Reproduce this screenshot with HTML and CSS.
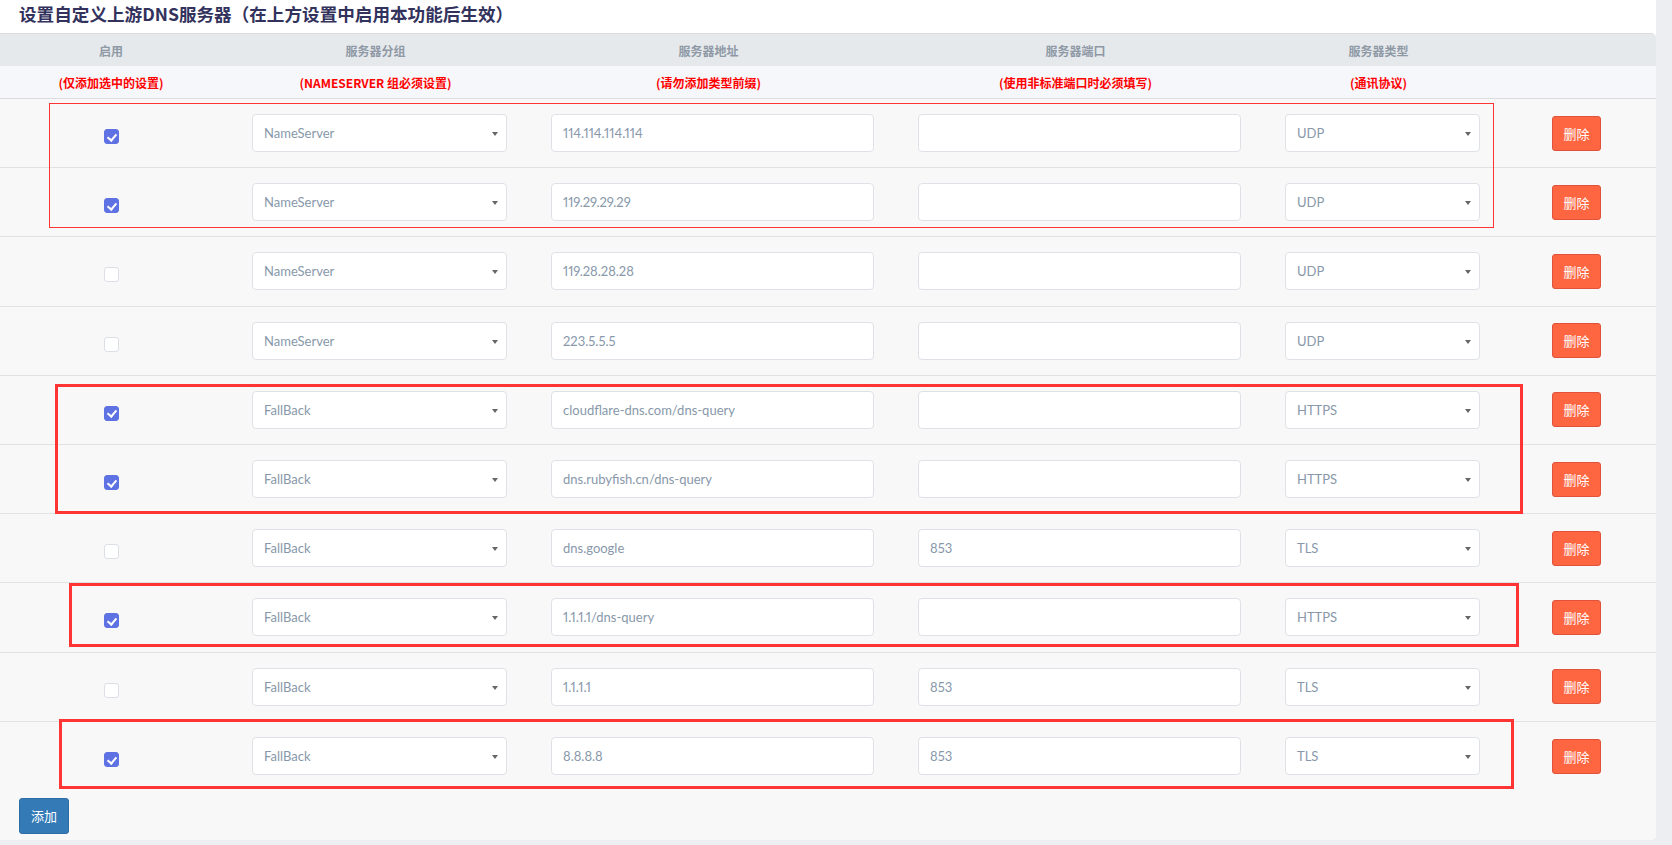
FILE: index.html
```html
<!DOCTYPE html>
<html lang="zh-CN">
<head>
<meta charset="utf-8">
<title>设置自定义上游DNS服务器</title>
<link rel="stylesheet" href="styles.css">
</head>
<body>
<div class="panel">
  <h3 class="title">设置自定义上游DNS服务器（在上方设置中启用本功能后生效）</h3>
  <div class="table">
    <div class="row head">
      <div class="cell c-chk">启用</div>
      <div class="cell">服务器分组</div>
      <div class="cell">服务器地址</div>
      <div class="cell">服务器端口</div>
      <div class="cell">服务器类型</div>
      <div class="cell"></div>
    </div>
    <div class="row desc">
      <div class="cell c-chk">(仅添加选中的设置)</div>
      <div class="cell">(NAMESERVER 组必须设置)</div>
      <div class="cell">(请勿添加类型前缀)</div>
      <div class="cell">(使用非标准端口时必须填写)</div>
      <div class="cell">(通讯协议)</div>
      <div class="cell"></div>
    </div>

    <div class="row item">
      <div class="cell c-chk"><input class="chk" type="checkbox" checked></div>
      <div class="cell"><div class="select">NameServer</div></div>
      <div class="cell"><input class="text" type="text" value="114.114.114.114"></div>
      <div class="cell"><input class="text" type="text" value=""></div>
      <div class="cell"><div class="select">UDP</div></div>
      <div class="cell c-del"><button class="btn-del">删除</button></div>
    </div>
    <div class="row item">
      <div class="cell c-chk"><input class="chk" type="checkbox" checked></div>
      <div class="cell"><div class="select">NameServer</div></div>
      <div class="cell"><input class="text" type="text" value="119.29.29.29"></div>
      <div class="cell"><input class="text" type="text" value=""></div>
      <div class="cell"><div class="select">UDP</div></div>
      <div class="cell c-del"><button class="btn-del">删除</button></div>
    </div>
    <div class="row item">
      <div class="cell c-chk"><input class="chk" type="checkbox"></div>
      <div class="cell"><div class="select">NameServer</div></div>
      <div class="cell"><input class="text" type="text" value="119.28.28.28"></div>
      <div class="cell"><input class="text" type="text" value=""></div>
      <div class="cell"><div class="select">UDP</div></div>
      <div class="cell c-del"><button class="btn-del">删除</button></div>
    </div>
    <div class="row item">
      <div class="cell c-chk"><input class="chk" type="checkbox"></div>
      <div class="cell"><div class="select">NameServer</div></div>
      <div class="cell"><input class="text" type="text" value="223.5.5.5"></div>
      <div class="cell"><input class="text" type="text" value=""></div>
      <div class="cell"><div class="select">UDP</div></div>
      <div class="cell c-del"><button class="btn-del">删除</button></div>
    </div>
    <div class="row item">
      <div class="cell c-chk"><input class="chk" type="checkbox" checked></div>
      <div class="cell"><div class="select">FallBack</div></div>
      <div class="cell"><input class="text" type="text" value="cloudflare-dns.com/dns-query"></div>
      <div class="cell"><input class="text" type="text" value=""></div>
      <div class="cell"><div class="select">HTTPS</div></div>
      <div class="cell c-del"><button class="btn-del">删除</button></div>
    </div>
    <div class="row item">
      <div class="cell c-chk"><input class="chk" type="checkbox" checked></div>
      <div class="cell"><div class="select">FallBack</div></div>
      <div class="cell"><input class="text" type="text" value="dns.rubyfish.cn/dns-query"></div>
      <div class="cell"><input class="text" type="text" value=""></div>
      <div class="cell"><div class="select">HTTPS</div></div>
      <div class="cell c-del"><button class="btn-del">删除</button></div>
    </div>
    <div class="row item">
      <div class="cell c-chk"><input class="chk" type="checkbox"></div>
      <div class="cell"><div class="select">FallBack</div></div>
      <div class="cell"><input class="text" type="text" value="dns.google"></div>
      <div class="cell"><input class="text" type="text" value="853"></div>
      <div class="cell"><div class="select">TLS</div></div>
      <div class="cell c-del"><button class="btn-del">删除</button></div>
    </div>
    <div class="row item">
      <div class="cell c-chk"><input class="chk" type="checkbox" checked></div>
      <div class="cell"><div class="select">FallBack</div></div>
      <div class="cell"><input class="text" type="text" value="1.1.1.1/dns-query"></div>
      <div class="cell"><input class="text" type="text" value=""></div>
      <div class="cell"><div class="select">HTTPS</div></div>
      <div class="cell c-del"><button class="btn-del">删除</button></div>
    </div>
    <div class="row item">
      <div class="cell c-chk"><input class="chk" type="checkbox"></div>
      <div class="cell"><div class="select">FallBack</div></div>
      <div class="cell"><input class="text" type="text" value="1.1.1.1"></div>
      <div class="cell"><input class="text" type="text" value="853"></div>
      <div class="cell"><div class="select">TLS</div></div>
      <div class="cell c-del"><button class="btn-del">删除</button></div>
    </div>
    <div class="row item item-last">
      <div class="cell c-chk"><input class="chk" type="checkbox" checked></div>
      <div class="cell"><div class="select">FallBack</div></div>
      <div class="cell"><input class="text" type="text" value="8.8.8.8"></div>
      <div class="cell"><input class="text" type="text" value="853"></div>
      <div class="cell"><div class="select">TLS</div></div>
      <div class="cell c-del"><button class="btn-del">删除</button></div>
    </div>

    <div class="foot"><button class="btn-add">添加</button></div>
  </div>
</div>

<div class="mark mark-1"></div>
<div class="mark mark-2"></div>
<div class="mark mark-3"></div>
<div class="mark mark-4"></div>
</body>
</html>
```

FILE: styles.css
```css
* { box-sizing: border-box; }

html, body {
  margin: 0;
  padding: 0;
}

body {
  position: relative;
  width: 1672px;
  height: 845px;
  overflow: hidden;
  background: #eceef1;
  font-family: Lato, "Noto Sans CJK SC", sans-serif;
  color: #8898aa;
}

.panel {
  width: 1656px;
  background: #ffffff;
  border-radius: 0 0 5px 0;
}

.title {
  margin: 0;
  height: 33px;
  padding-left: 19px;
  font-size: 17.6px;
  line-height: 28px;
  font-weight: 700;
  color: #32325d;
  font-family: "Noto Sans CJK SC", sans-serif;
  white-space: nowrap;
}

.table {
  background: #f8f8f8;
  border-top: 1px solid #dcdcdc;
  border-radius: 0 5px 5px 0;
  overflow: hidden;
}

.row {
  display: grid;
  grid-template-columns: 230px 299px 367px 367px 239px 1fr;
  align-items: center;
}

.head {
  height: 32px;
  background: #e6e9ec;
  font-family: "Noto Sans CJK SC", sans-serif;
  font-size: 12px;
  font-weight: 700;
  color: #8f99a6;
}

.desc {
  height: 33px;
  background: #f5f7fa;
  border-bottom: 1px solid #dcdcdc;
  font-family: "Noto Sans CJK SC", sans-serif;
  font-size: 12px;
  font-weight: 700;
  color: #ff0000;
}

.head .cell,
.desc .cell {
  text-align: center;
  padding: 0 26px 0 18px;
  white-space: nowrap;
}

.head .c-chk,
.desc .c-chk {
  padding: 0 8px 0 0;
}

.item {
  height: 69.2px;
  border-bottom: 1px solid #e2e2e2;
}

.item-last {
  border-bottom: none;
}

.item .cell {
  padding: 0 22px;
  display: flex;
  align-items: center;
}

.item .c-chk {
  padding: 0 8px 0 0;
  justify-content: center;
}

.item .c-del {
  padding: 0 0 0 50px;
}

.chk {
  appearance: none;
  -webkit-appearance: none;
  margin: 7px 0 0 0;
  width: 15px;
  height: 15px;
  border: 1px solid #dcdfe6;
  border-radius: 3px;
  background: #ffffff;
  position: relative;
}

.chk:checked {
  background: #5e72e4;
  border-color: #5e72e4;
}

.chk:checked::after {
  content: "";
  position: absolute;
  left: 4px;
  top: 1.5px;
  width: 4px;
  height: 7px;
  border: solid #ffffff;
  border-width: 0 2px 2px 0;
  transform: rotate(40deg);
}

.text,
.select {
  width: 100%;
  height: 38px;
  border: 1px solid #dee1e6;
  border-radius: 4px;
  background: #ffffff;
  font-family: Lato, sans-serif;
  font-size: 13px;
  font-variant-numeric: proportional-nums;
  color: #8898aa;
  padding: 0 11px;
  outline: none;
}

.select {
  position: relative;
  display: flex;
  align-items: center;
}

.select::after {
  content: "";
  position: absolute;
  right: 8px;
  top: 17px;
  border-left: 3.5px solid transparent;
  border-right: 3.5px solid transparent;
  border-top: 4px solid #666666;
}

.btn-del {
  width: 49px;
  height: 35px;
  padding: 0;
  border: 1px solid #e0523a;
  border-radius: 3px;
  background: #fd6641;
  color: #ffffff;
  font-family: "Noto Sans CJK SC", sans-serif;
  font-size: 13px;
}

.foot {
  padding: 7px 0 6px 19px;
}

.btn-add {
  display: block;
  width: 50px;
  height: 36px;
  padding: 0;
  border: 1px solid #2e6da4;
  border-radius: 3px;
  background: #337ab7;
  color: #ffffff;
  font-family: "Noto Sans CJK SC", sans-serif;
  font-size: 13px;
}

.mark {
  position: absolute;
  border: 3px solid #ff3535;
  pointer-events: none;
}

.mark-1 {
  left: 49px;
  top: 103px;
  width: 1445px;
  height: 125px;
  border-width: 1px;
}

.mark-2 {
  left: 55px;
  top: 384px;
  width: 1468px;
  height: 130px;
}

.mark-3 {
  left: 69px;
  top: 583px;
  width: 1450px;
  height: 64px;
}

.mark-4 {
  left: 59px;
  top: 719px;
  width: 1455px;
  height: 70px;
}
```
